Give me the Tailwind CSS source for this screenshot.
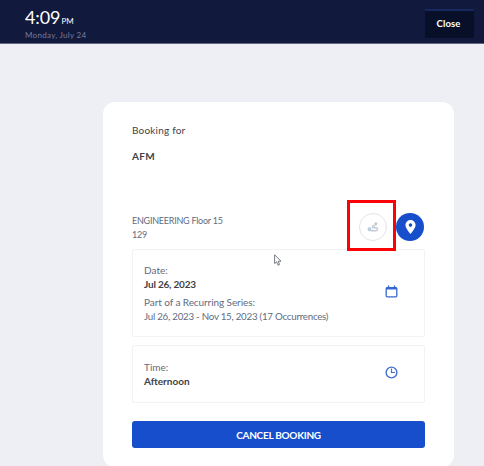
<!DOCTYPE html>
<html lang="en">
<head>
<meta charset="utf-8">
<title>Booking</title>
<script src="https://cdn.jsdelivr.net/npm/@tailwindcss/browser@4"></script>
</head>
<body class="relative h-[466px] overflow-hidden bg-[#eeeff4] font-['Lato',sans-serif] text-[10px] leading-[14px] text-[#626b80]">
<header class="flex h-11 items-start justify-between border-b border-[#61667d] bg-[#11193d] pt-[9px] pr-[10px] pl-[25px]">
  <div>
    <div class="-mt-px flex h-[20px] items-baseline gap-[1px] text-white"><span class="text-[18px] leading-[19px] tracking-[-0.1px]">4:09</span><span class="text-[8px] leading-[10px] tracking-[0.1px]">PM</span></div>
    <div class="text-[8px] leading-[14px] tracking-[0.3px] text-[#7a7c9b]">Monday, July 24</div>
  </div>
  <button class="h-[29px] w-[49px] border-t-2 border-[#17285f] bg-[#080f29] pr-[2px] pb-px text-[9.5px] font-bold tracking-[0.1px] text-white">Close</button>
</header>
<main class="mt-[58px] ml-[103px] flex h-[365px] w-[351px] flex-col rounded-xl bg-white px-[29px] pt-[21px]">
  <div class="tracking-[0.2px] text-[#3f4247]">Booking for</div>
  <div class="mt-3 font-bold tracking-[0.3px] text-[#3f4247]">AFM</div>
  <div class="relative z-10 mt-[37px] flex h-[50px] shrink-0 items-start justify-between">
    <div class="pt-[14px] text-[9px] tracking-[-0.24px]"><div>ENGINEERING Floor 15</div><div>129</div></div>
    <div class="mr-px flex items-start">
      <div class="flex h-[51px] w-[49px] items-center justify-center border-[3px] border-[#fb0207]">
        <div class="ml-[3px] mt-[3px] flex size-[28px] items-center justify-center rounded-full border border-[#e2e4ea]">
          <svg class="size-[12px]" viewBox="0 0 12 12" fill="none" stroke="#c5cad2" stroke-width="1.5"><circle cx="2.5" cy="8.2" r="1.2" stroke="#b3cadb"/><path d="M3.5 9.8H8.5Q10.8 9.6 10.5 8T8 6.8H6.5Q5 6.6 5.6 5.4T8 4.8"/><path d="M8.8 1.3Q10.8 1.5 10.4 3L8.8 5L7.3 3Q6.9 1.4 8.8 1.3Z" fill="#c5cad2" stroke="none"/></svg>
        </div>
      </div>
      <div class="mt-[13px] flex size-[28px] items-center justify-center rounded-full bg-[#164ecb]">
        <svg class="h-[14px] w-[11px]" viewBox="0 0 11 14"><path fill="#fff" fill-rule="evenodd" d="M5.5 0A5.1 5.1 0 0 0 .4 5.1C.4 8.6 5.5 14 5.5 14S10.6 8.6 10.6 5.1A5.1 5.1 0 0 0 5.5 0ZM5.5 3.3A1.8 1.8 0 1 1 5.5 6.9A1.8 1.8 0 0 1 5.5 3.3Z"/></svg>
      </div>
    </div>
  </div>
  <section class="-mt-px flex h-[88px] shrink-0 items-start justify-between rounded-[2px] border border-[#f3f3f6] pt-[13px] pr-[26px] pl-[11px]">
    <div>
      <div>Date:</div>
      <div class="font-bold tracking-[-0.2px] text-[#3f4247]">Jul 26, 2023</div>
      <div class="mt-[4px] tracking-[-0.08px]">Part of a Recurring Series:</div>
      <div class="text-[9.75px] tracking-[-0.25px]">Jul 26, 2023 - Nov 15, 2023 (17 Occurrences)</div>
    </div>
    <svg class="mt-[22px] size-[13px]" viewBox="0 0 13 13" fill="none" stroke="#3868d0" stroke-width="1.3"><rect x="1.2" y="2.6" width="10.6" height="9.2" rx="1"/><path d="M1 3.5H12" stroke-width="2"/><path d="M3.5 .5V4M9.5 .5V4"/></svg>
  </section>
  <section class="mt-2 flex h-[58px] shrink-0 items-start justify-between rounded-[2px] border border-[#f3f3f6] pt-[14px] pr-[26px] pl-[11px]">
    <div><div>Time:</div><div class="font-bold text-[#3f4247]">Afternoon</div></div>
    <svg class="mt-[6px] size-[13px]" viewBox="0 0 13 13" fill="none" stroke="#4270d0" stroke-width="1.4"><circle cx="6.5" cy="6.5" r="5.4"/><path d="M6.5 2.5V6.5H10" stroke-width="1.2"/></svg>
  </section>
  <button class="mt-[18px] h-[27px] shrink-0 rounded-[3px] bg-[#164ecb] text-[10px] font-bold tracking-[-0.27px] text-white">CANCEL BOOKING</button>
</main>
<svg class="absolute top-[254px] left-[274px] h-[12px] w-[8px]" viewBox="0 0 8 12" fill="#fff" stroke="#666a70" stroke-width=".9"><path d="M.6 .8V9.5L2.6 7.8L4 11.2L5.6 10.5L4.2 7.2H7Z"/></svg>
</body>
</html>
